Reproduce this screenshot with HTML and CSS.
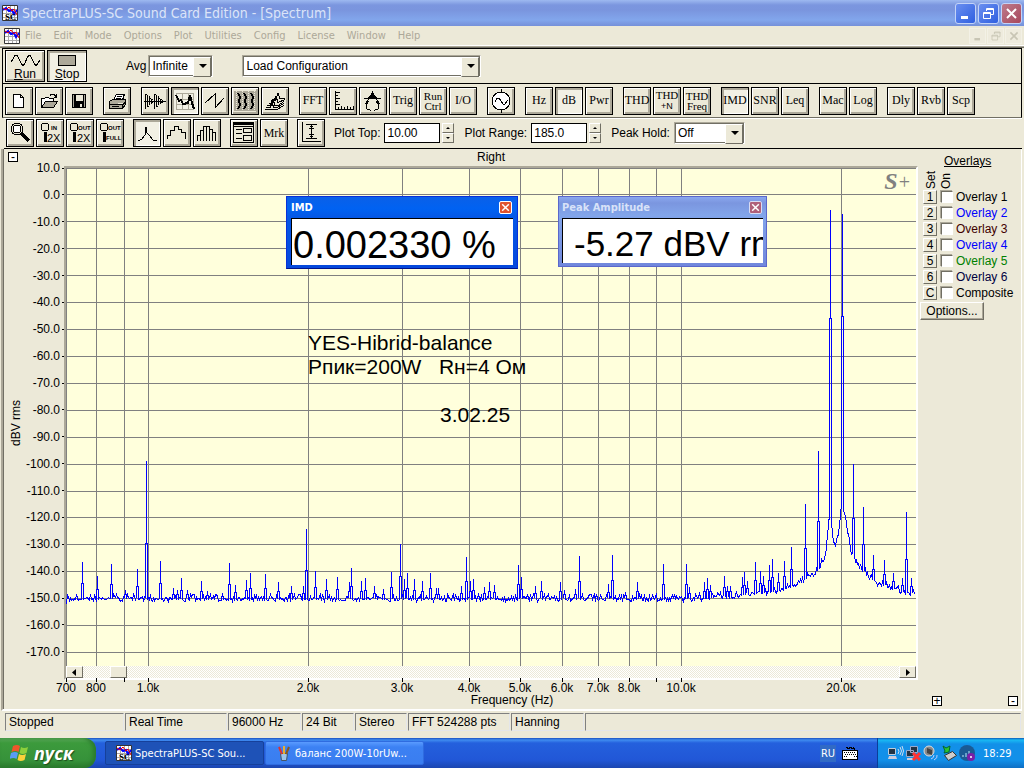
FILE: index.html
```
<!DOCTYPE html>
<html lang="en">
<head>
  <meta charset="UTF-8" />
  <meta name="viewport" content="width=device-width, initial-scale=1.0" />
  <title>SpectraPLUS-SC Sound Card Edition - [Spectrum]</title>
  <link rel="stylesheet" href="styles.css">
</head>
<body>
  <!-- shared icons -->
  <svg class="defs" width="0" height="0">
    <symbol id="app" viewBox="0 0 16 16">
      <path fill="#fff" stroke="#333" d="M.5.5h15v15H.5z"/>
      <path stroke="#aaa" fill="none" d="M4.5 1v14M8.5 1v14M12.5 1v14M1 4.5h14M1 8.5h14M1 12.5h14"/>
      <path stroke="#00f" fill="none" stroke-width="2" d="M1 5l3-2 3 3 3-1 2 4 3-4"/>
      <path stroke="#e00" fill="none" d="M1 3l3 2 3-3 3 4 2-2 3 6"/>
    </symbol>
    <symbol id="min" viewBox="0 0 15 15"><path fill="currentColor" d="M3 10h7v3H3z"/></symbol>
    <symbol id="restore" viewBox="0 0 15 15"><path fill="none" stroke="currentColor" d="M5.5 5V2.5h7v6H10M5 3.5h8M2.5 6.500h7v6h-7zM2 7.500h8"/></symbol>
    <symbol id="close" viewBox="0 0 15 15"><path fill="none" stroke="currentColor" stroke-width="2" d="M3 3l9 9M12 3l-9 9"/></symbol>
  </svg>

  <header class="titlebar">
    <svg class="app-icon" width="16" height="16"><use href="#app"/><text x="3" y="15" class="sc">SC</text></svg>
    <h1>SpectraPLUS-SC Sound Card Edition - [Spectrum]</h1>
    <div class="win-buttons">
      <button aria-label="Minimize"><svg width="15" height="15"><use href="#min"/></svg></button>
      <button aria-label="Restore"><svg width="15" height="15"><use href="#restore"/></svg></button>
      <button class="close" aria-label="Close"><svg width="15" height="15"><use href="#close"/></svg></button>
    </div>
  </header>

  <nav class="menubar">
    <svg class="app-icon" width="16" height="16"><use href="#app"/></svg>
    <a href="#">File</a><a href="#">Edit</a><a href="#">Mode</a><a href="#">Options</a><a href="#">Plot</a><a href="#">Utilities</a><a href="#">Config</a><a href="#">License</a><a href="#">Window</a><a href="#">Help</a>
    <div class="mdi-buttons">
      <button aria-label="Minimize document"><svg width="12" height="12"><use href="#min"/></svg></button>
      <button aria-label="Restore document"><svg width="12" height="12"><use href="#restore"/></svg></button>
      <button aria-label="Close document"><svg width="12" height="12"><use href="#close"/></svg></button>
    </div>
  </nav>

  <div class="bar bar-run">
    <button class="big"><svg width="30" height="14" viewBox="0 0 30 14"><path d="M1 9L3 6l2-4h2l2 4 2 4 2 3 2-3 2-5 2-3h1l2 4 2 4 2 3 2-3 2-3"/></svg><span><u>R</u>un</span></button>
    <button class="big on"><svg width="30" height="14" viewBox="0 0 30 14"><path fill="#aca899" d="M6.500 2.500h17v10h-17z"/></svg><span><u>S</u>top</span></button>
    <label for="avg">Avg</label>
    <div class="combo combo-avg"><select id="avg"><option>Infinite</option></select></div>
    <div class="combo combo-config"><select aria-label="Configuration"><option>Load Configuration</option></select></div>
  </div>

  <div class="bar bar-tools">
    <div class="group">
      <button class="tool" aria-label="New"><svg viewBox="0 0 24 24"><path fill="#fff" d="M6.500 5.500h7l3 3v10h-10zM13.500 5.500v3h3"/></svg></button>
      <button class="tool" aria-label="Open"><svg viewBox="0 0 24 24"><path fill="#fff" d="M4.500 18.500v-9h3l1-1h3l1 1h4v3"/><path fill="#aca899" d="M4.500 18.500l4-6h12l-4 6z"/><path d="M13 6.500c2-2 4-2 6 1M19.500 5v3h-3"/></svg></button>
      <button class="tool" aria-label="Save"><svg viewBox="0 0 24 24"><path fill="#aca899" d="M5.500 5.500h13v13h-13z"/><path stroke="none" fill="#fff" d="M8 6h8v6H8z"/><path fill="#000" d="M7.500 6v7h9V6M7.500 14.500h9v4h-9z"/><path stroke="none" fill="#ece9d8" d="M9 6h7v6H9zM13 15h2v3h-2z"/></svg></button>
    </div>
    <div class="group">
      <button class="tool" aria-label="Print"><svg viewBox="0 0 24 24"><path fill="#fff" d="M8.500 11l3-6h8l-2 6"/><path fill="#aca899" d="M4.500 12.500l3-2h13v5l-3 4h-13zM5 15.500h13l2-2M17.500 15v4"/><path d="M12 7.500h5M11 9.500h5M7 17.500h7"/></svg></button>
    </div>
    <div class="group">
      <button class="tool" aria-label="Time series"><svg viewBox="0 0 24 24"><path d="M1 12.500h22M2.500 5v15M4.500 7v11M6.500 9v7M8.500 10v5M10.500 12v1M11.500 5v15M13.500 7v11M15.500 9v7M17.500 10v5M19.500 11v3"/><path stroke-dasharray="1 1" d="M3 5l8 7-8 8M12 5l8 7-8 8"/></svg></button>
      <button class="tool on" aria-label="Spectrum"><svg viewBox="0 0 24 24"><path stroke="#aca899" d="M3.500 4v16M9.500 4v16M15.500 4v16M20.500 4v16M3 4.500h18M3 10.500h18M3 15.500h18M3 20.500h18"/><path class="bold" d="M3 6l3 6 2-1 2 4 5-1 2-8 2 8 2 6"/></svg></button>
      <button class="tool" aria-label="Phase"><svg viewBox="0 0 24 24"><path d="M2 14L12 5v14l9-10"/></svg></button>
      <button class="tool" aria-label="Spectrogram"><svg viewBox="0 0 24 24"><path fill="#aca899" stroke="none" d="M1 2h22v20H1z"/><path stroke="#ece9d8" stroke-dasharray="1 1" d="M3.500 2v20M9.500 2v20M15.500 2v20M21.500 2v20"/><path class="bold" d="M5 4l2 4-1 4 1 4-2 4M11 4l2 4-1 4 1 4-2 4M18 4l2 4-1 4 1 4-2 4"/></svg></button>
      <button class="tool" aria-label="Surface"><svg viewBox="0 0 24 24"><path d="M2 20.500h12l7-4M3 18.500h4l2-4 2 4h3l7-4M4 16.500h3l3-6 2 6h3l6-4M6 14.500h3l4-7 2 6 7-3M8 11.500h4l3-7 2 5h5"/></svg></button>
    </div>
    <div class="group">
      <button class="tool">FFT</button>
      <button class="tool" aria-label="Scale"><svg viewBox="0 0 24 24"><path d="M4.500 2v18H23M5 3.500h4M5 6.500h2M5 9.500h4M5 12.500h2M5 15.500h4M7.500 18v2M10.500 17v3M13.500 18v2M16.500 17v3M19.500 18v2M22.500 17v3"/></svg></button>
      <button class="tool" aria-label="Calibration"><svg viewBox="0 0 24 24"><path d="M11.500 2v4M3 9.500h17M11 6l-7 9M12 6l7 9M8 12l-3 4 1 4 3 1h1M15 12l3 4-1 4-3 1h-1"/><path fill="#000" d="M11.500 4l4 5h-8z"/></svg></button>
      <button class="tool">Trig</button>
      <button class="tool two">Run<br>Ctrl</button>
      <button class="tool">I/O</button>
    </div>
    <div class="group">
      <button class="tool" aria-label="Signal generator"><svg viewBox="0 0 24 24"><circle cx="12" cy="12" r="9" fill="#fff"/><path d="M12.500 0v3M12.500 21v3M6 13l2-4h2l4 6h2l3-4"/></svg></button>
    </div>
    <div class="group">
      <button class="tool">Hz</button>
      <button class="tool on">dB</button>
      <button class="tool">Pwr</button>
    </div>
    <div class="group">
      <button class="tool">THD</button>
      <button class="tool two">THD<br><small>+N</small></button>
      <button class="tool two">THD<br>Freq</button>
    </div>
    <div class="group">
      <button class="tool on">IMD</button>
      <button class="tool">SNR</button>
      <button class="tool">Leq</button>
    </div>
    <div class="group">
      <button class="tool">Mac</button>
      <button class="tool">Log</button>
    </div>
    <div class="group">
      <button class="tool">Dly</button>
      <button class="tool">Rvb</button>
      <button class="tool">Scp</button>
    </div>
  </div>

  <div class="bar bar-plot">
    <div class="group">
      <button class="tool" aria-label="Zoom"><svg viewBox="0 0 24 24"><circle cx="9" cy="8" r="6"/><circle cx="9" cy="8" r="4" fill="#fff"/><path class="thick" d="M13 12l8 8"/></svg></button>
      <button class="tool" aria-label="Zoom in 2X"><svg viewBox="0 0 24 24"><circle cx="7" cy="6" r="4"/><path class="thick" d="M7 11v10"/><text x="13" y="9" class="tiny">IN</text><text x="9" y="21" class="mag">2X</text></svg></button>
      <button class="tool" aria-label="Zoom out 2X"><svg viewBox="0 0 24 24"><circle cx="6" cy="6" r="4"/><path class="thick" d="M6 11v10"/><text x="10" y="9" class="tiny">OUT</text><text x="9" y="21" class="mag">2X</text></svg></button>
      <button class="tool" aria-label="Zoom out full"><svg viewBox="0 0 24 24"><circle cx="6" cy="6" r="4"/><path class="thick" d="M6 11v10"/><text x="10" y="9" class="tiny">OUT</text><text x="8" y="19" class="tiny">FULL</text></svg></button>
    </div>
    <div class="group">
      <button class="tool on" aria-label="Line plot"><svg viewBox="0 0 24 24"><path d="M3 20l4-2 3-4 1-8 1 6 3 3 3 4 4 1"/></svg></button>
      <button class="tool" aria-label="Step plot"><svg viewBox="0 0 24 24"><path d="M2.500 18v-4h3v-5h4v-4h4v3h3v3h4v7"/></svg></button>
      <button class="tool" aria-label="Bar plot"><svg viewBox="0 0 24 24"><path d="M2.500 20v-6h3v6V9.500h3V20V5.500h3V20V5.500h3V20V8.500h3V20v-8.500h3V20"/></svg></button>
    </div>
    <div class="group">
      <button class="tool" aria-label="Dialog"><svg viewBox="0 0 24 24"><path fill="#ece9d8" d="M1.500 1.500h20v20h-20z"/><path class="bold" d="M2 3h19"/><path d="M2 5.500h19M4 8.500h6M4 12.500h6M4 17.500h6M11.500 7.500h8v4h-8zM11.500 14.500h8v5h-8z"/></svg></button>
      <button class="tool">Mrk</button>
    </div>
    <div class="group">
      <button class="tool" aria-label="Fit vertical"><svg viewBox="0 0 24 24"><path d="M3.500 1v19.500H22M7 3.500h11M7 17.500h11M12.500 4v13M10 7.500h5M11 5.500h3M10 13.500h5M11 15.500h3"/></svg></button>
    </div>
    <label for="plot-top">Plot Top:</label>
    <input type="text" id="plot-top" value="10.00">
    <div class="spin"><button aria-label="Raise plot top"></button><button class="down" aria-label="Lower plot top"></button></div>
    <label for="plot-range">Plot Range:</label>
    <input type="text" id="plot-range" value="185.0">
    <div class="spin"><button aria-label="Raise plot range"></button><button class="down" aria-label="Lower plot range"></button></div>
    <label for="peak-hold">Peak Hold:</label>
    <div class="combo combo-hold"><select id="peak-hold"><option>Off</option></select></div>
  </div>

  <main class="workspace">
    <div class="upper">
      <section class="chart">
        <div class="corner"><button class="box" aria-label="Collapse">-</button></div>
        <div class="channel">Right</div>
        <div class="yaxis">
          <span class="unit">dBV rms</span>
          <ol id="ylabels"></ol>
        </div>
        <div class="plot">
          <svg id="graph" viewBox="66 168 850 498" preserveAspectRatio="none">
            <path id="grid"/>
            <path id="trace"/>
          </svg>
          <div class="logo"><b>S</b>+</div>
          <div class="note">
            <p>YES-Hibrid-balance</p>
            <p>Рпик=200W &nbsp; Rн=4 Ом</p>
            <p class="date">3.02.25</p>
          </div>
          <div class="meter imd">
            <div class="meter-title">IMD<button aria-label="Close IMD"><svg width="11" height="11"><use href="#close"/></svg></button></div>
            <output>0.002330 %</output>
          </div>
          <div class="meter peak">
            <div class="meter-title">Peak Amplitude<button aria-label="Close Peak Amplitude"><svg width="11" height="11"><use href="#close"/></svg></button></div>
            <output>-5.27 dBV rms</output>
          </div>
          <div class="scroll">
            <button aria-label="Scroll left"><svg width="5" height="7"><path d="M4 0v7L0 3.500z"/></svg></button>
            <button class="thumb" aria-label="Scroll thumb"></button>
            <button aria-label="Scroll right"><svg width="5" height="7"><path d="M1 0v7l4-3.500z"/></svg></button>
          </div>
        </div>
        <div class="xaxis" id="xlabels"></div>
      </section>

      <aside class="overlays">
        <h2>Overlays</h2>
        <div class="heads"><span>Set</span><span>On</span></div>
        <div class="row"><button>1</button><input type="checkbox" id="o1"><label for="o1">Overlay 1</label></div>
        <div class="row blue"><button>2</button><input type="checkbox" id="o2"><label for="o2">Overlay 2</label></div>
        <div class="row maroon"><button>3</button><input type="checkbox" id="o3"><label for="o3">Overlay 3</label></div>
        <div class="row blue"><button>4</button><input type="checkbox" id="o4"><label for="o4">Overlay 4</label></div>
        <div class="row green"><button>5</button><input type="checkbox" id="o5"><label for="o5">Overlay 5</label></div>
        <div class="row navy"><button>6</button><input type="checkbox" id="o6"><label for="o6">Overlay 6</label></div>
        <div class="row"><button>C</button><input type="checkbox" id="oc"><label for="oc">Composite</label></div>
        <button class="options">Options...</button>
      </aside>
    </div>
    <div class="lower">
      <span class="xtitle">Frequency (Hz)</span>
      <div class="lower-boxes"><button class="box" aria-label="Expand">+</button><button class="box" aria-label="Shrink">-</button></div>
    </div>
  </main>

  <footer class="status">
    <span class="c1">Stopped</span><span class="c2">Real Time</span><span class="c3">96000 Hz</span><span class="c4">24 Bit</span><span class="c4">Stereo</span><span class="c2">FFT 524288 pts</span><span class="c3">Hanning</span><span class="rest"></span>
  </footer>

  <div class="taskbar">
    <button class="start">
      <svg width="20" height="20" viewBox="0 0 20 20"><path fill="#f0562b" d="M3 3q4-2 7 0L8.500 9q-3-2-7 0z"/><path fill="#8ccf3c" d="M11 4q3 2 7 0l-1.500 6q-4 2-7 0z"/><path fill="#5a9cf5" d="M1 10q4-2 7 0l-1.500 6q-3-2-7 0z"/><path fill="#fbd13a" d="M9 11q3 2 7 0l-1.500 6q-4 2-7 0z"/></svg>
      пуск
    </button>
    <button class="task active"><svg width="16" height="16"><use href="#app"/><text x="3" y="15" class="sc">SC</text></svg>SpectraPLUS-SC Sou...</button>
    <button class="task"><svg width="16" height="16" viewBox="0 0 16 16"><path fill="#9ec4e8" stroke="#456" d="M4.500 8.500h7l-1 7h-5z"/><path stroke="#d33" stroke-width="2" d="M6 9L3 2"/><path stroke="#e8b030" stroke-width="2" d="M8 9V1"/><path stroke="#8a5a20" stroke-width="2" d="M10 9l3-7"/></svg>баланс 200W-10rUw...</button>
    <div class="lang"><span>RU</span>
      <svg width="16" height="14" viewBox="0 0 16 14" shape-rendering="crispEdges"><path fill="none" stroke="#000" d="M4 1.500h1l1 1h1l1-1h1l1 1h1l1-1M12.500 2v2"/><rect y="4" width="16" height="10" rx="1" fill="#000"/><rect x="1" y="5" width="14" height="8" fill="#fff"/><path stroke="#000" stroke-dasharray="1 1" d="M2 6.500h12M3 8.500h12M2 10.500h3M12 10.500h3"/></svg>
    </div>
    <div class="tray">
      <svg width="17" height="16" viewBox="0 0 17 16"><path fill="#234" stroke="#bcd" d="M1.500 3.500h7v6h-7z"/><path fill="#ccd" d="M2 11h7l1 3H1z"/><path fill="none" stroke="#cde" d="M11 4q2 2 0 5M13 2q3 4 0 8M15 1q3 5 0 10"/></svg>
      <svg width="17" height="16" viewBox="0 0 17 16"><path fill="#234" stroke="#9ac" d="M5.500 1.500h7v6h-7zM1.500 5.500h7v6h-7z"/><path fill="#ccd" d="M2 13h7v2H2z"/><path stroke="#f33" stroke-width="3" d="M8 8l7 7M15 8l-7 7"/></svg>
      <svg width="17" height="16" viewBox="0 0 17 16"><circle cx="6" cy="6" r="5" fill="#888" stroke="#ddd"/><path fill="#444" d="M4 3l5 2v5l-5-2z"/><path fill="none" stroke="#bcf" d="M8 14q3-1 3-4M11 15q4-2 3-5"/></svg>
      <svg width="17" height="16" viewBox="0 0 17 16"><path fill="#ccc" stroke="#333" d="M3.500 10.500l8-4 4 4-8 5z"/><path fill="#2dc42d" stroke="#063" d="M2 1l3 2 4-2-1 6-5 1 1-2z"/></svg>
      <svg width="17" height="16" viewBox="0 0 17 16"><circle cx="8" cy="8" r="8" fill="#1a5a94"/><path stroke="#6aa0c8" stroke-width="2" d="M4 12v-2M7 12V8M10 12V6"/><circle cx="12" cy="12" r="4" fill="#7a1fa8"/><circle cx="12" cy="12" r="1" fill="#fff"/></svg>
      <time>18:29</time>
    </div>
  </div>

  <script src="chart.js"></script>
</body>
</html>
```
FILE: styles.css
```
* { box-sizing: border-box; }
body {
  margin: 0;
  height: 100vh;
  min-height: 600px;
  display: flex;
  flex-direction: column;
  overflow: hidden;
  background: #ece9d8;
  color: #000;
  font-family: "Liberation Sans", Arial, sans-serif;
  font-size: 12px;
}
button, select, input {
  font: inherit;
  color: inherit;
  margin: 0;
  padding: 0;
  border-radius: 0;
}
h1, h2, p, ol { margin: 0; padding: 0; font-weight: normal; }
.defs { position: absolute; }
.sc { font: bold 9px "Liberation Serif", serif; }

/* title bar */
.titlebar {
  flex: none;
  height: 26px;
  display: flex;
  align-items: center;
  gap: 4px;
  padding: 0 2px;
  background: linear-gradient(#9db9f0 0, #7b96df 5px, #7a95de 10px, #82a6ec 20px, #7590d9 26px);
}
.titlebar h1 {
  flex: 1;
  font: 500 14px "DejaVu Sans Condensed", "DejaVu Sans", sans-serif;
  color: #dbe4f8;
}
.win-buttons { display: flex; gap: 2px; }
.win-buttons button {
  width: 21px;
  height: 21px;
  display: flex;
  align-items: center;
  justify-content: center;
  color: #fff;
  background: linear-gradient(135deg, #6a8ff0, #2f5fe0);
  border: 1px solid #c3d3f8;
  border-radius: 3px;
}
.win-buttons .close { background: linear-gradient(135deg, #bd7b8c, #a8485c); }

.menubar {
  flex: none;
  height: 22px;
  display: flex;
  align-items: center;
  padding: 0 2px 2px 4px;
  border-bottom: 1px solid #716f64;
  box-shadow: inset 0 -1px #aca899, inset 0 -2px #fff;
  font: 11px "DejaVu Sans Condensed", "DejaVu Sans", sans-serif;
}
.menubar a {
  padding: 0 6px;
  color: #aca899;
  text-decoration: none;
}
.menubar .app-icon { margin-right: -1px; }
.mdi-buttons { margin-left: auto; display: flex; gap: 1px; }
.mdi-buttons button {
  width: 17px;
  height: 16px;
  padding: 1px;
  color: #c8c5b4;
  background: #eeebdd;
  border: 1px solid #f3f1e6;
}

/* toolbars */
.bar {
  flex: none;
  display: flex;
  align-items: center;
  margin: 0 2px;
  border: 1px solid #000;
}
.bar-run { height: 36px; padding: 0 2px; gap: 2px; }
.bar-tools {
  height: 34px;
  padding: 0 2px;
  gap: 10px;
  border-top: 0;
  border-bottom: 1px solid #716f64;
}
.bar-plot {
  height: 31px;
  padding: 0 2px;
  margin-left: 4px;
  border-width: 0 0 1px;
  box-shadow: inset 0 1px #fff;
}
.bar-plot .group { margin-right: 9px; }
.group { display: flex; gap: 2px; }
.big, .tool {
  flex: none;
  background: #ece9d8;
  border: 1px solid #000;
  box-shadow: inset 1px 1px #fff, inset -2px -2px #aca899;
}
.big {
  width: 40px;
  height: 32px;
  display: flex;
  flex-direction: column;
  align-items: center;
  padding-top: 2px;
  line-height: 14px;
}
.tool {
  width: 28px;
  height: 28px;
  display: flex;
  align-items: center;
  justify-content: center;
  font: 12px/11px "Liberation Serif", serif;
  white-space: nowrap;
}
.two { display: block; font-size: 11px; line-height: 10px; text-align: center; }
.two small { font: 9px/9px "Liberation Sans", sans-serif; }
.on { box-shadow: inset 2px 2px #aca899, inset -1px -1px #fff; background: #f2f0e4; }
.tool svg { width: 24px; height: 24px; flex: none; }
.tool svg, .big svg {
  fill: none;
  stroke: #000;
  shape-rendering: crispEdges;
}
.tool text { fill: #000; stroke: none; font-family: "Liberation Sans", sans-serif; }
.tiny { font-size: 6px; font-weight: bold; }
.mag { font-size: 11px; }
.bold { stroke-width: 2; }
.thick { stroke-width: 3; }
.bar-run label { margin-left: 37px; }

.combo {
  position: relative;
  height: 22px;
  border: 1px solid;
  border-color: #aca899 #fff #fff #aca899;
  box-shadow: inset 1px 1px #716f64;
}
.combo select {
  width: 100%;
  height: 100%;
  padding-left: 2px;
  appearance: none;
  border: 1px solid #716f64;
  background: #fff;
}
.combo::before {
  content: "";
  position: absolute;
  right: 1px;
  top: 1px;
  width: 16px;
  height: 18px;
  background: #ece9d8;
  border: 1px solid;
  border-color: #fff #716f64 #716f64 #fff;
  pointer-events: none;
}
.combo::after {
  content: "";
  position: absolute;
  right: 5px;
  top: 8px;
  border: 4px solid transparent;
  border-top-color: #000;
  border-bottom: 0;
  pointer-events: none;
}
.combo-avg { width: 65px; }
.combo-config { width: 239px; margin-left: 27px; }
.combo-hold { width: 71px; margin-left: 4px; }
.bar-plot input {
  width: 56px;
  height: 20px;
  margin: 0 2px 0 4px;
  padding: 0 2px;
  border: 1px solid #000;
  background: #fff;
}
.spin { display: flex; flex-direction: column; margin-right: 10px; }
.spin button {
  width: 12px;
  height: 10px;
  display: flex;
  align-items: center;
  justify-content: center;
  background: #ece9d8;
  border: 1px solid;
  border-color: #fff #716f64 #716f64 #fff;
}
.spin button::after {
  content: "";
  border: 2px solid transparent;
  border-bottom-color: #000;
  border-top: 0;
}
.spin .down::after { border-bottom: 0; border-top: 2px solid #000; }

/* spectrum view */
.workspace {
  flex: 1;
  min-height: 0;
  display: flex;
  flex-direction: column;
  margin: 0 2px 0 1px;
  border-left: 2px solid #aca899;
  border-right: 1px solid #fff;
  border-bottom: 2px solid #fff;
  box-shadow: inset 1px 0 #716f64;
}
.upper { flex: 1; min-height: 0; display: flex; }
.chart {
  flex: 1;
  min-width: 0;
  display: grid;
  grid-template-columns: 61px 1fr;
  grid-template-rows: 17px 1fr 13px;
}
.corner { padding: 3px 0 0 5px; }
.box {
  width: 10px;
  height: 10px;
  display: flex;
  align-items: center;
  justify-content: center;
  line-height: 8px;
  background: #fff;
  border: 1px solid #000;
}
.channel { text-align: center; line-height: 17px; }
.yaxis {
  display: flex;
  align-items: center;
  padding-left: 6px;
}
.unit {
  width: 14px;
  writing-mode: vertical-rl;
  transform: rotate(180deg);
}
.yaxis ol {
  flex: 1;
  align-self: stretch;
  display: flex;
  flex-direction: column;
  justify-content: space-between;
  margin: -5px 0 21px;
  list-style: none;
  text-align: right;
}
.yaxis li {
  height: 14px;
  line-height: 14px;
  display: flex;
  align-items: center;
  justify-content: flex-end;
  gap: 2px;
}
.yaxis li::after { content: ""; width: 2px; height: 1px; background: #000; }
.plot {
  position: relative;
  display: flex;
  flex-direction: column;
  border: 2px solid;
  border-color: #aca899 #fff #fff #aca899;
  background: #ffffdc;
}
#graph { display: block; width: 100%; flex: 1; min-height: 0; }
#graph path { fill: none; shape-rendering: crispEdges; vector-effect: non-scaling-stroke; }
#grid { stroke: #808080; }
#trace { stroke: #00f; }
.logo {
  position: absolute;
  right: 5px;
  top: 1px;
  color: #808080;
  font: italic 20px/24px "Liberation Serif", serif;
}
.logo b { font-size: 24px; }
.note {
  position: absolute;
  left: 242px;
  top: 163px;
  font-size: 21px;
  line-height: 24px;
}
.note .date { margin: 24px 0 0 132px; }
.meter {
  position: absolute;
  top: 28px;
  display: flex;
  flex-direction: column;
  padding: 0 4px 3px;
}
.imd {
  left: 220px;
  width: 232px;
  height: 73px;
  background: linear-gradient(#0a60e8 0, #0062f2 12px, #0558e6 20px, #0548dc);
  border: 1px solid #0831d9;
  border-bottom-color: #00138c;
}
.peak {
  left: 492px;
  width: 209px;
  height: 71px;
  padding: 0 3px 3px;
  background: linear-gradient(#8aa8ee 0, #7b96df 6px, #82a5ea 18px, #7087dc);
  border: 1px solid #5a67cc;
}
.meter-title {
  flex: none;
  height: 21px;
  display: flex;
  align-items: center;
  justify-content: space-between;
  color: #fff;
  font: bold 11px "DejaVu Sans Condensed", "DejaVu Sans", sans-serif;
}
.peak .meter-title { color: #d8e2f8; }
.meter button {
  width: 13px;
  height: 13px;
  margin-right: 1px;
  display: flex;
  align-items: center;
  justify-content: center;
  color: #fff;
  background: #e0532e;
  border: 1px solid #fff;
  border-radius: 2px;
}
.peak button { background: #b0607a; border-color: #d8dcf4; }
.meter output {
  flex: 1;
  overflow: hidden;
  white-space: nowrap;
  background: #fff;
  border: 1px solid #000;
  border-width: 1px 0 0 1px;
  padding-left: 1px;
  font-size: 38px;
  line-height: 52px;
}
.peak output { font-size: 35px; line-height: 50px; padding-left: 11px; }

.scroll {
  flex: none;
  height: 12px;
  display: flex;
  background: repeating-conic-gradient(#fff 0 25%, #ece9d8 0 50%) 0 0 / 2px 2px;
}
.scroll button {
  width: 17px;
  display: flex;
  align-items: center;
  justify-content: center;
  background: #ece9d8;
  border: 1px solid;
  border-color: #fff #716f64 #716f64 #fff;
}
.scroll .thumb { margin: 0 auto 0 27px; }
.xaxis { grid-column: 2; position: relative; margin: 0 2px; }
.xaxis span {
  position: absolute;
  top: 0;
  transform: translateX(-50%);
  padding-top: 2px;
  line-height: 13px;
}
.xaxis i {
  position: absolute;
  top: -2px;
  width: 1px;
  height: 4px;
  background: #000;
}

.overlays { flex: none; width: 103px; padding: 5px 0 0 2px; }
.overlays h2 {
  padding-left: 24px;
  font-size: 12px;
  line-height: 14px;
  text-decoration: underline;
}
.heads { display: flex; height: 21px; gap: 1px; padding-left: 4px; align-items: flex-end; }
.heads span {
  width: 14px;
  line-height: 14px;
  writing-mode: vertical-rl;
  transform: rotate(180deg);
}
.row { display: flex; height: 16px; align-items: center; padding-left: 3px; gap: 3px; }
.row button, .options {
  width: 14px;
  height: 14px;
  line-height: 11px;
  background: #ece9d8;
  border: 1px solid;
  border-color: #fff #716f64 #716f64 #fff;
}
.row input {
  appearance: none;
  width: 12px;
  height: 12px;
  background: #fff;
  border: 1px solid;
  border-color: #716f64 #fff #fff #716f64;
  box-shadow: -1px -1px #aca899;
}
.row button { margin-right: 1px; }
.blue label { color: #00f; }
.maroon label { color: #400000; }
.green label { color: #008000; }
.navy label { color: #000040; }
.overlays .options {
  width: 64px;
  height: 18px;
  margin-top: 1px;
  box-shadow: inset -1px -1px #aca899;
}
.lower { flex: none; height: 16px; position: relative; text-align: center; line-height: 13px; padding-top: 1px; }
.lower-boxes { position: absolute; right: 3px; top: 3px; display: flex; gap: 66px; }

/* status bar */
.status {
  flex: none;
  height: 27px;
  display: flex;
  gap: 1px;
  padding: 2px 3px 7px 5px;
}
.status span {
  padding-left: 3px;
  line-height: 16px;
  border: 1px solid;
  border-color: #808080 #e4e6ea #e4e6ea #808080;
  white-space: nowrap;
}
.c1 { width: 119px; }
.c2 { width: 102px; }
.c3 { width: 73px; }
.c4 { width: 52px; }
.rest { flex: 1; }

.taskbar {
  flex: none;
  height: 30px;
  display: flex;
  align-items: center;
  background: linear-gradient(#1b50c0 0, #3f8cf0 2px, #2460dd 5px, #2157d7 22px, #1b46b0 30px);
  color: #fff;
  font: 11px "DejaVu Sans Condensed", "DejaVu Sans", sans-serif;
}
.start {
  width: 96px;
  height: 30px;
  display: flex;
  align-items: center;
  gap: 4px;
  padding-left: 10px;
  border: 0;
  border-radius: 0 12px 12px 0;
  background: linear-gradient(#5fae5f 0, #3c9a3c 5px, #36923a 22px, #2a7a2d 30px);
  box-shadow: inset -3px 0 4px #2a7a2d;
  font: italic bold 18px "Open Sans", sans-serif;
  text-shadow: 1px 1px 1px #1c4d1c;
}
.task {
  width: 159px;
  height: 24px;
  display: flex;
  align-items: center;
  gap: 3px;
  margin-left: 1px;
  padding-left: 10px;
  border: 1px solid #2f6ce0;
  border-radius: 2px;
  background: linear-gradient(#5a9bff, #3c81f3 5px, #3a7df0);
  white-space: nowrap;
}
.task.active { margin-left: 9px; background: #1e52b7; border-color: #16409a; }
.lang { margin-left: auto; display: flex; align-items: center; gap: 6px; margin-right: 19px; }
.lang span { padding: 2px 1px; background: #316ac5; }
.tray {
  width: 147px;
  height: 30px;
  display: flex;
  align-items: center;
  gap: 1px;
  padding-left: 9px;
  border-left: 1px solid #0a3f9a;
  background: linear-gradient(#0c59b9 0, #19b9f3 2px, #1290e8 6px, #1290e9 22px, #0f6fc4 30px);
}
.tray time { margin-left: 6px; }
```
FILE: chart.js
```
// plot area in svg units
const LEFT = 66, TOP = 168, WIDTH = 850, HEIGHT = 498;
const DECADE = 532.6;
const DB = HEIGHT / 185;

const freqs = [700, 800, 900, 1000, 2000, 3000, 4000, 5000, 6000, 7000, 8000, 9000, 10000, 20000];
const unlabeled = [900, 9000];

const xlabels = document.getElementById("xlabels");
const ylabels = document.getElementById("ylabels");
let grid = "";

freqs.forEach(f => {
  const offset = Math.floor(Math.log10(f / 700) * DECADE);
  grid += `M${LEFT + offset + 0.5} ${TOP}v${HEIGHT}`;
  const tick = document.createElement("i");
  tick.style.left = (offset / WIDTH * 100) + "%";
  xlabels.appendChild(tick);
  if (unlabeled.includes(f)) return;
  const label = document.createElement("span");
  label.textContent = f < 1000 ? f : (f / 1000).toFixed(1) + "k";
  label.style.left = (offset / WIDTH * 100) + "%";
  xlabels.appendChild(label);
});

for (let db = 10; db >= -170; db -= 10) {
  const y = TOP + Math.floor((10 - db) * DB);
  grid += `M${LEFT} ${y + 0.5}h${WIDTH}`;
  const li = document.createElement("li");
  li.textContent = db.toFixed(1);
  ylabels.appendChild(li);
}
document.getElementById("grid").setAttribute("d", grid);

// noise floor
const floor = [
  [66, 598], [690, 598], [733, 595], [760, 592], [777, 590], [790, 585], [803, 579],
  [817, 570], [825, 555], [829, 513], [832, 535], [835, 544], [839, 527], [841, 505],
  [844, 513], [850, 548], [857, 563], [865, 572], [877, 583], [887, 585], [900, 590], [914, 593]
];
// spikes: x, top
const peaks = [
  [82, 562], [97, 576], [111, 564], [125, 590], [137, 569], [146, 461], [160, 561], [173, 588],
  [177, 590], [181, 578], [187, 590], [201, 581], [207, 591], [222, 593], [229, 563], [235, 585],
  [246, 580], [250, 573], [265, 574], [278, 582], [291, 586], [303, 586], [306, 529], [315, 571],
  [326, 579], [337, 577], [349, 582], [351, 568], [361, 581], [365, 578], [374, 586], [383, 589],
  [391, 572], [400, 544], [404, 579], [407, 573], [414, 579], [422, 581], [430, 573], [436, 588],
  [438, 588], [461, 586], [466, 557], [470, 581], [473, 579], [484, 587], [489, 582], [494, 585],
  [518, 565], [521, 577], [535, 586], [541, 581], [560, 582], [564, 590], [575, 589], [579, 556],
  [596, 594], [608, 584], [612, 555], [625, 592], [637, 582], [663, 564], [672, 594], [686, 564],
  [689, 587], [699, 592], [704, 582], [707, 578], [710, 585], [724, 576], [727, 586], [730, 586],
  [742, 577], [744, 572], [747, 581], [755, 562], [760, 571], [763, 576], [769, 565], [772, 559],
  [778, 573], [784, 561], [791, 547], [805, 504], [818, 451], [830, 210], [842, 214], [853, 464],
  [863, 507], [873, 555], [884, 560], [893, 573], [902, 578], [906, 512], [911, 578]
];

function floorAt(x) {
  const i = Math.max(1, floor.findIndex(p => p[0] >= x));
  const [x0, y0] = floor[i - 1], [x1, y1] = floor[i];
  return y0 + (y1 - y0) * (x - x0) / (x1 - x0);
}

let seed = 7;
function noise() {
  seed = (seed * 16807) % 2147483647;
  return seed / 2147483647;
}

const tops = new Map(peaks);
let d = "M66.5 604";
for (let x = 67; x < 915; x++) {
  const base = floorAt(x);
  const wobble = noise() < 0.12 ? -4 : Math.round(noise() * 5 - 2);
  if (tops.has(x)) {
    const top = tops.get(x);
    const shoulder = top + (base - top) * (top < 300 ? 0.35 : 0.6);
    d += `L${x - 0.5} ${base}V${shoulder}L${x + 0.5} ${shoulder}V${top}V${shoulder}H${x + 1.5}V${base + 1}`;
    x++;
  } else {
    d += `L${x + 0.5} ${base + wobble + 0.5}`;
  }
}
document.getElementById("trace").setAttribute("d", d);
```
